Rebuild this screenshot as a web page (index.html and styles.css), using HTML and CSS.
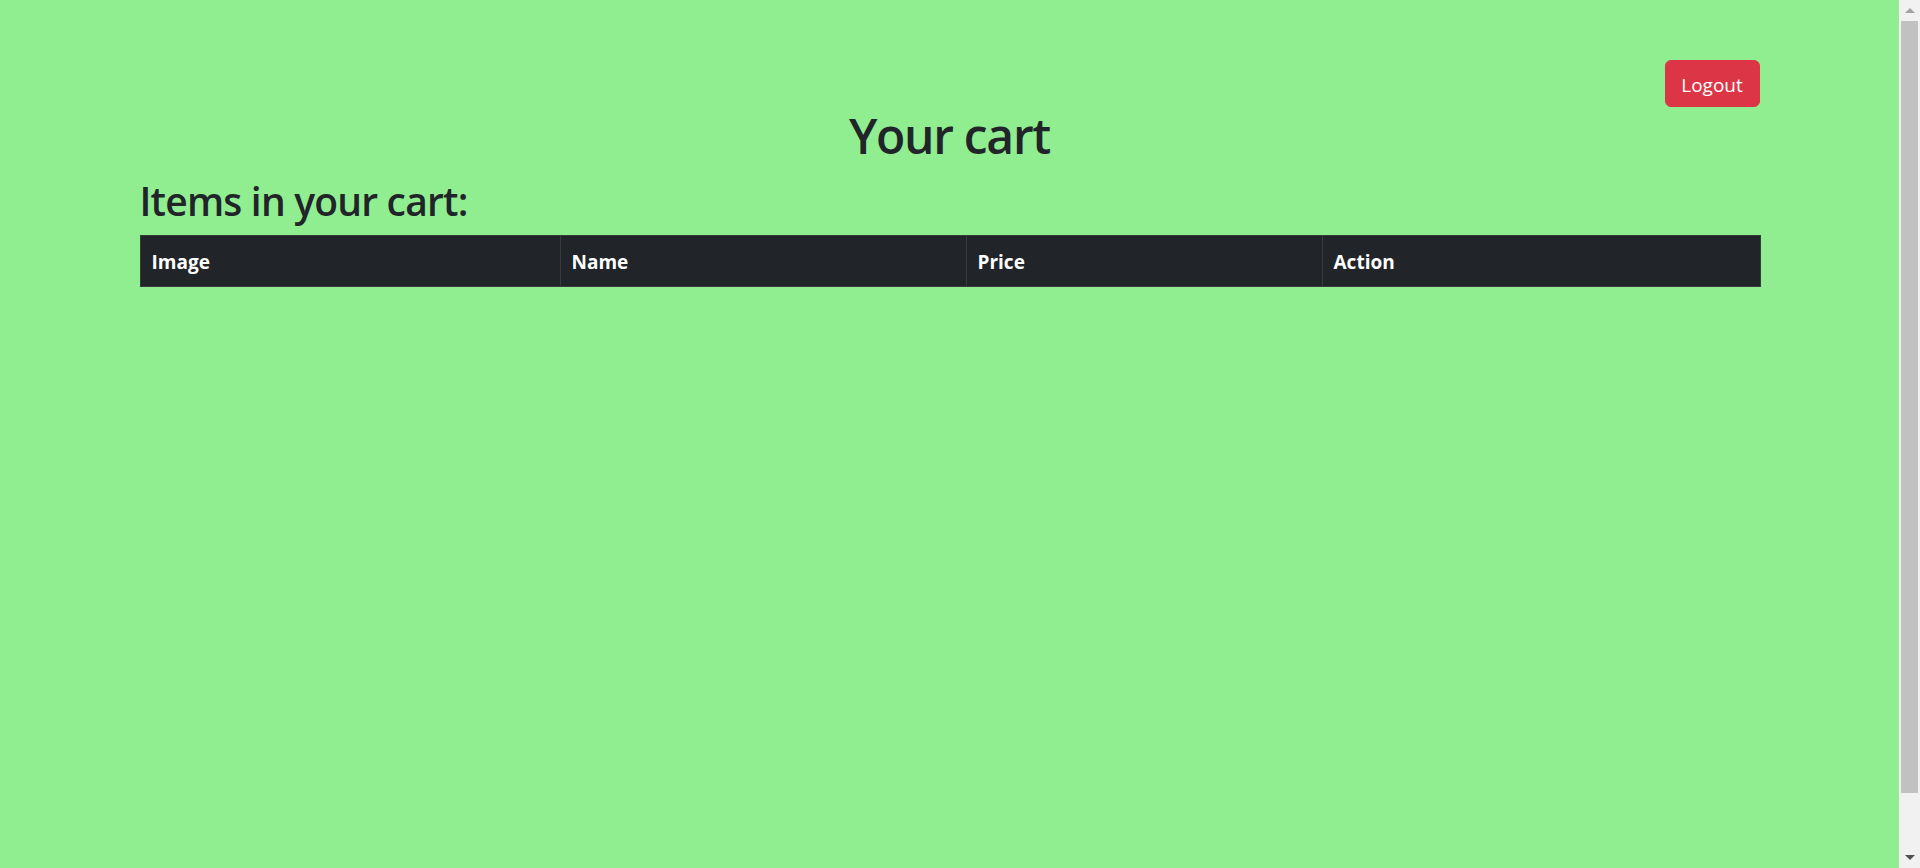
FILE: index.html
```html
<!DOCTYPE html>
<html lang="en">
<head>
<meta charset="utf-8">
<title>Your cart</title>
<link rel="stylesheet" href="styles.css">
</head>
<body>
<div class="page">
  <div class="container">
    <div class="top-bar">
      <button class="btn-logout" type="button">Logout</button>
    </div>
    <h1 class="title">Your cart</h1>
    <h2 class="subtitle">Items in your cart:</h2>
    <table class="cart-table">
      <thead>
        <tr>
          <th class="col-image">Image</th>
          <th class="col-name">Name</th>
          <th class="col-price">Price</th>
          <th class="col-action">Action</th>
        </tr>
      </thead>
      <tbody></tbody>
    </table>
  </div>
</div>
<div class="scrollbar">
  <div class="sb-arrow sb-up"><span class="tri-up"></span></div>
  <div class="sb-track"><div class="sb-thumb"></div></div>
  <div class="sb-arrow sb-down"><span class="tri-down"></span></div>
</div>
</body>
</html>
```
FILE: styles.css
```css
html, body {
  margin: 0;
  padding: 0;
  height: 100%;
}
body {
  display: flex;
  background: #90ee90;
  font-family: "Open Sans", "Noto Sans", sans-serif;
  color: #212529;
  overflow: hidden;
}
.page {
  flex: 1;
  min-width: 0;
}
.container {
  width: 1620px;
  margin: 0 auto;
}
.top-bar {
  display: flex;
  justify-content: flex-end;
  padding-top: 60px;
}
.btn-logout {
  box-sizing: border-box;
  font-family: inherit;
  font-size: 19px;
  line-height: 30px;
  color: #fff;
  background: #dc3545;
  border: 1px solid #dc3545;
  border-radius: 6px;
  padding: 8.5px 0 6.5px;
  height: 47px;
  width: 95px;
  text-align: center;
  cursor: pointer;
}
.title {
  margin: 0;
  text-align: center;
  font-size: 48px;
  line-height: 57px;
  font-weight: 600;
  letter-spacing: -1.3px;
}
.subtitle {
  margin: 13px 0 10px;
  font-size: 39px;
  line-height: 48px;
  font-weight: 600;
  letter-spacing: -0.8px;
}
.cart-table {
  width: 1620px;
  border-collapse: collapse;
  table-layout: fixed;
}
.cart-table th {
  box-sizing: border-box;
  background: #212529;
  color: #fff;
  text-align: left;
  font-size: 19px;
  line-height: 30px;
  font-weight: 700;
  padding: 11px 11px 9px;
  border: 1px solid #373b3e;
}
.col-image { width: 420px; }
.col-name { width: 406px; }
.col-price { width: 356px; }
.col-action { width: 438px; }

.scrollbar {
  width: 21px;
  flex: none;
  background: #f1f1f1;
  display: flex;
  flex-direction: column;
}
.sb-arrow {
  height: 21px;
  display: flex;
  align-items: center;
  justify-content: center;
}
.sb-track {
  flex: 1;
  padding: 0 2px;
}
.sb-thumb {
  height: 772px;
  background: #c1c1c1;
}
.tri-up {
  width: 0; height: 0;
  border-left: 5px solid transparent;
  border-right: 5px solid transparent;
  border-bottom: 5px solid #a3a3a3;
}
.tri-down {
  width: 0; height: 0;
  border-left: 5px solid transparent;
  border-right: 5px solid transparent;
  border-top: 5px solid #505050;
}
```
